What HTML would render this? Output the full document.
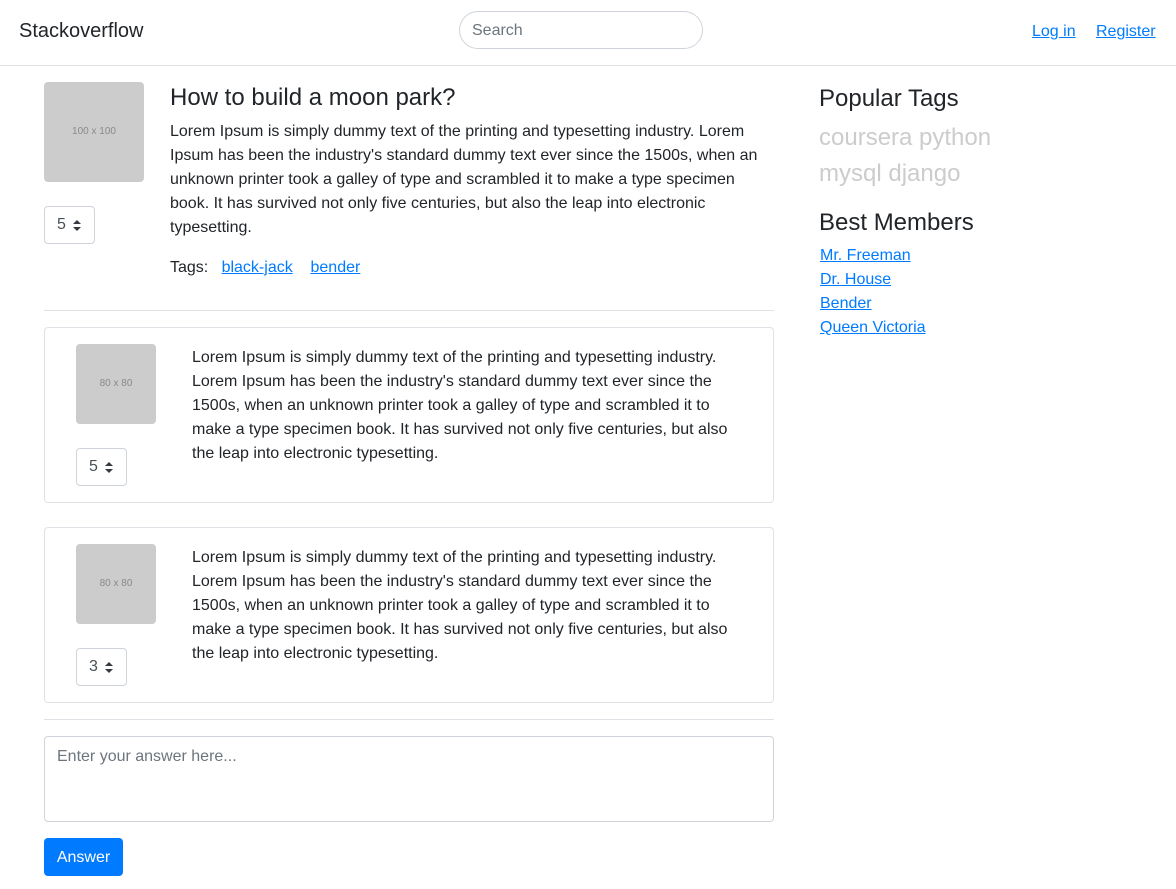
<!DOCTYPE html>
<html><head><meta charset="utf-8"><style>
*{box-sizing:border-box;margin:0;padding:0}
body{width:1176px;height:889px;overflow:hidden;background:#fff;font-family:"Liberation Sans",sans-serif;color:#212529;font-size:16px;line-height:24px;position:relative}
a{color:#007bff;text-decoration:underline}
.abs{position:absolute}
.nav{left:0;top:0;width:1176px;height:66px;border-bottom:1px solid #dee2e6}
.ph{background:#ccc;border-radius:4px;color:#8a8a8a;display:flex;align-items:center;justify-content:center;font-size:10px}
.sel{border:1px solid #ced4da;border-radius:4px;width:51px;height:38px;display:flex;align-items:center;padding-left:12px;font-size:16px;color:#495057}
.sel svg{margin-left:7px}
.card{border:1px solid #dee2e6;border-radius:4px;left:44px;width:730px;height:176px}
.txt{width:540px}
hr{position:absolute;border:0;border-top:1px solid #dee2e6;left:44px;width:730px}
h3{font-size:24px;font-weight:500;line-height:29px}
</style></head><body>
<div class="abs nav">
<div class="abs" style="left:19px;top:17px;font-size:20px;line-height:28px">Stackoverflow</div>
<div class="abs" style="left:459px;top:11px;width:244px;height:38px;border:1px solid #ced4da;border-radius:19px;padding:7px 12px;color:#6c757d">Search</div>
<a class="abs" style="left:1032px;top:20px">Log in</a>
<a class="abs" style="left:1096px;top:20px">Register</a>
</div>
<div class="abs ph" style="left:44px;top:82px;width:100px;height:100px">100 x 100</div>
<div class="abs sel" style="left:44px;top:206px">5<svg width="8" height="11" viewBox="0 0 8 11"><path d="M0 4L4 0L8 4Z M0 7L4 11L8 7Z" fill="#343a40"/></svg></div>
<h3 class="abs" style="left:170px;top:83px">How to build a moon park?</h3>
<div class="abs" style="left:170px;top:120px;width:600px">Lorem Ipsum is simply dummy text of the printing and typesetting industry. Lorem Ipsum has been the industry's standard dummy text ever since the 1500s, when an unknown printer took a galley of type and scrambled it to make a type specimen book. It has survived not only five centuries, but also the leap into electronic typesetting.</div>
<div class="abs" style="left:170px;top:256px">Tags: &nbsp;&nbsp;<a>black-jack</a> &nbsp;&nbsp;&nbsp;<a>bender</a></div>
<hr style="top:310px">
<div class="abs card" style="top:327px">
<div class="abs ph" style="left:31px;top:16px;width:80px;height:80px">80 x 80</div>
<div class="abs sel" style="left:31px;top:120px">5<svg width="8" height="11" viewBox="0 0 8 11"><path d="M0 4L4 0L8 4Z M0 7L4 11L8 7Z" fill="#343a40"/></svg></div>
<div class="abs txt" style="left:147px;top:18px">Lorem Ipsum is simply dummy text of the printing and typesetting industry. Lorem Ipsum has been the industry's standard dummy text ever since the 1500s, when an unknown printer took a galley of type and scrambled it to make a type specimen book. It has survived not only five centuries, but also the leap into electronic typesetting.</div>
</div>
<div class="abs card" style="top:527px">
<div class="abs ph" style="left:31px;top:16px;width:80px;height:80px">80 x 80</div>
<div class="abs sel" style="left:31px;top:120px">3<svg width="8" height="11" viewBox="0 0 8 11"><path d="M0 4L4 0L8 4Z M0 7L4 11L8 7Z" fill="#343a40"/></svg></div>
<div class="abs txt" style="left:147px;top:18px">Lorem Ipsum is simply dummy text of the printing and typesetting industry. Lorem Ipsum has been the industry's standard dummy text ever since the 1500s, when an unknown printer took a galley of type and scrambled it to make a type specimen book. It has survived not only five centuries, but also the leap into electronic typesetting.</div>
</div>
<hr style="top:719px">
<div class="abs" style="left:44px;top:736px;width:730px;height:86px;border:1px solid #ced4da;border-radius:4px;padding:8px 12px;color:#6c757d">Enter your answer here...</div>
<div class="abs" style="left:44px;top:838px;width:79px;height:38px;background:#007bff;border-radius:4px;color:#fff;text-align:center;line-height:39px">Answer</div>
<h3 class="abs" style="left:819px;top:84px">Popular Tags</h3>
<div class="abs" style="left:819px;top:120px;font-size:24px;line-height:36px;color:#ccc">coursera python<br>mysql django</div>
<h3 class="abs" style="left:819px;top:208px">Best Members</h3>
<div class="abs" style="left:820px;top:244px;line-height:24px"><a>Mr. Freeman</a><br><a>Dr. House</a><br><a>Bender</a><br><a>Queen Victoria</a></div>
</body></html>
